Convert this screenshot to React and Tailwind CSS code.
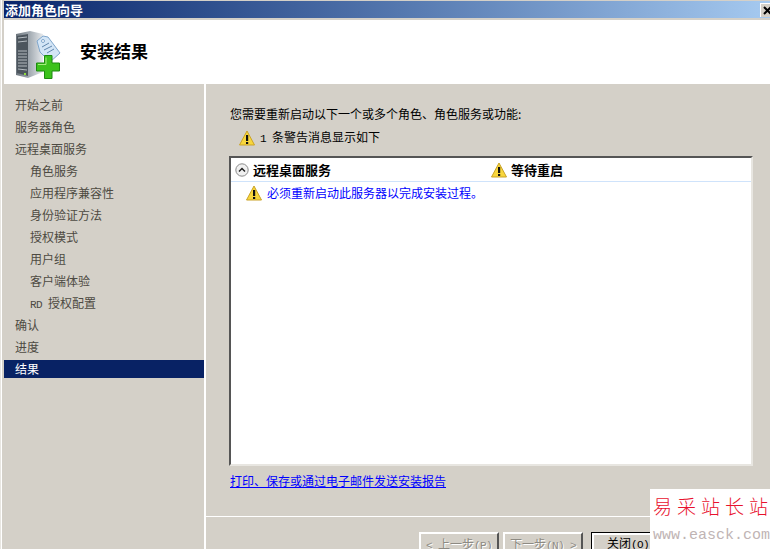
const sideItems = [
  { label: "开始之前" },
  { label: "服务器角色" },
  { label: "远程桌面服务" },
  { label: "角色服务", sub: true },
  { label: "应用程序兼容性", sub: true },
  { label: "身份验证方法", sub: true },
  { label: "授权模式", sub: true },
  { label: "用户组", sub: true },
  { label: "客户端体验", sub: true },
  { label: "RD 授权配置", latin: "RD ", rest: "授权配置", sub: true },
  { label: "确认" },
  { label: "进度" },
  { label: "结果", active: true },
];

// half-width latin like the old bitmap font: 6px per character
function Latin({ children }) {
  return <span className="font-['Liberation_Mono',monospace] text-[11px] tracking-[-0.6px] whitespace-pre">{children}</span>;
}

function WarnIcon() {
  return (
    <svg width="16" height="16" viewBox="0 0 16 16" className="shrink-0">
      <path d="M8 1 L15.5 15 L0.5 15 Z" fill="#f8d63c" stroke="#c9a227" strokeLinejoin="round" />
      <rect x="7" y="5" width="2.2" height="6" fill="#111" />
      <rect x="7" y="12" width="2.2" height="2" fill="#111" />
    </svg>
  );
}

function ServerIcon() {
  return (
    <svg width="46" height="50" viewBox="0 0 46 50" className="block">
      <defs>
        <linearGradient id="srv" x1="0" y1="0" x2="1" y2="0">
          <stop offset="0" stopColor="#6b747c" />
          <stop offset="0.5" stopColor="#a3abb2" />
          <stop offset="1" stopColor="#e6e9ec" />
        </linearGradient>
      </defs>
      <path d="M1 4 L15 1 L28 4 L28 42 L13 48 L1 45 Z" fill="url(#srv)" />
      <path d="M2 6 L13 4 L13 46 L2 43 Z" fill="#4c555d" />
      <path d="M3 8 L12 7 M3 12 L12 11 M3 21 L12 21 M3 24 L12 24 M3 27 L12 27 M3 30 L12 30 M3 33 L12 33 M3 36 L12 36 M3 39 L12 40" stroke="#b4bbc0" strokeWidth="1" />
      <rect x="9" y="43" width="2" height="2" fill="#8fdc3c" />
      <path d="M22 11 L28 6 L33 7 L45 23 L35 32 L25 22 Z" fill="#d3e5f6" stroke="#7fa6cc" />
      <circle cx="28" cy="11" r="1.5" fill="#fff" stroke="#7fa6cc" />
      <path d="M27 17 L34 13 M29 20 L37 16 M32 23 L39 19" stroke="#5f86ad" strokeWidth="1" />
      <path d="M29.5 25.5 L37 25.5 L37 33 L44.5 33 L44.5 41 L37 41 L37 48.5 L29.5 48.5 L29.5 41 L21.5 41 L21.5 33 L29.5 33 Z" fill="#3cc21c" stroke="#1d8a10" />
      <path d="M31 27.5 L31 34.5 L23 34.5" fill="none" stroke="#a6ee7e" strokeWidth="1" />
    </svg>
  );
}

function WizardButton({ children }) {
  return (
    <div className="h-[24px] w-[80px] shrink-0 border-t-2 border-r-2 border-l-2 border-t-white border-r-[#555] border-l-white pt-[2px] text-center text-[#8d8a83] [text-shadow:1px_1px_0_#fff]">
      {children}
    </div>
  );
}

export default function App() {
  return (
    <div className="relative flex h-[549px] w-[770px] overflow-hidden bg-[#d4d0c8] font-['Noto_Sans_CJK_SC',sans-serif] text-xs">
      {/* desktop sliver behind the window */}
      <div className="w-px bg-[#e8e6e1]" />
      <div className="w-px bg-white" />
      <div className="w-[2px]" />

      <div className="flex min-w-0 flex-1 flex-col">
        <div className="h-px" />
        {/* Title bar */}
        <div className="flex h-[17px] items-center justify-between bg-gradient-to-r from-[#0a246a] to-[#a6caf0] pl-px">
          <span className="text-[13px] leading-none font-bold text-white">添加角色向导</span>
          <div className="h-[14px] w-[10px] overflow-hidden border-t border-l border-white bg-[#d4d0c8]">
            <svg width="10" height="12" viewBox="0 0 10 12" className="block">
              <path d="M3 3 L10 10 M10 3 L3 10" stroke="#000" strokeWidth="2" />
            </svg>
          </div>
        </div>
        <div className="h-[2px]" />

        {/* Header */}
        <div className="flex h-[64px] items-center bg-white">
          <div className="ml-[11px] w-[65px] pt-[5px]">
            <ServerIcon />
          </div>
          <span className="pb-[3px] text-[17px] leading-none font-bold text-black">安装结果</span>
        </div>

        <div className="flex min-h-0 flex-1">
          {/* Sidebar */}
          <div className="flex w-[200px] shrink-0 flex-col pt-[12px]">
            {sideItems.map((item) => (
              <div
                key={item.label}
                className={`h-[18px] leading-[18px] ${item.sub ? "pl-[26px]" : "pl-[11px]"} ${
                  item.active ? "bg-[#082264] text-white" : "mb-[4px] text-[#4d4a42]"
                }`}
              >
                {item.latin ? (
                  <>
                    <Latin>{item.latin}</Latin>
                    {item.rest}
                  </>
                ) : (
                  item.label
                )}
              </div>
            ))}
          </div>

          <div className="w-[2px] shrink-0 bg-white" />

          {/* Main */}
          <div className="flex min-w-0 flex-1 flex-col">
            <div className="flex min-h-0 flex-1 flex-col pt-[21px] pr-[17px] pl-[24px]">
              <p className="leading-[18px] text-black">您需要重新启动以下一个或多个角色、角色服务或功能:</p>
              <div className="mt-[7px] flex h-[16px] items-center gap-[5px] pl-[9px] text-black">
                <WarnIcon />
                <span>
                  <Latin>1 </Latin>条警告消息显示如下
                </span>
              </div>

              {/* Result box */}
              <div className="mt-[10px] -ml-px h-[310px] border-2 border-t-[#555] border-r-[#e8e6e1] border-b-[#e8e6e1] border-l-[#555] bg-white">
                <div className="flex h-[24px] items-center border-b border-[#cfe3fb] pl-[4px]">
                  <svg width="14" height="14" viewBox="0 0 14 14" className="shrink-0">
                    <circle cx="7" cy="7" r="6.2" fill="#f0f0f0" stroke="#8a8a8a" />
                    <path d="M4 8.5 L7 5.5 L10 8.5" fill="none" stroke="#222" strokeWidth="1.5" />
                  </svg>
                  <span className="ml-[4px] w-[238px] text-[13px] font-bold text-black">远程桌面服务</span>
                  <WarnIcon />
                  <span className="ml-[4px] text-[13px] font-bold text-black">等待重启</span>
                </div>
                <div className="mt-[3px] flex items-center gap-[5px] pl-[15px]">
                  <WarnIcon />
                  <span className="text-[#0000ff]">必须重新启动此服务器以完成安装过程。</span>
                </div>
              </div>

              <a className="mt-[7px] self-start text-[#0000ff] underline">打印、保存或通过电子邮件发送安装报告</a>
            </div>

            {/* Footer */}
            <div className="flex h-[33px] shrink-0 items-start border-t border-t-white pt-[15px] pl-[213px]">
              <WizardButton>
                <Latin>{"< "}</Latin>上一步<Latin>(P)</Latin>
              </WizardButton>
              <div className="w-[4px] shrink-0" />
              <WizardButton>
                下一步<Latin>{"(N) >"}</Latin>
              </WizardButton>
              <div className="w-[8px] shrink-0" />
              <div className="shrink-0 border border-black">
                <div className="h-[24px] w-[80px] border-t-2 border-l-2 border-t-white border-l-white pl-[13px] text-black">
                  关闭<Latin>(O)</Latin>
                </div>
              </div>
            </div>
          </div>
        </div>
      </div>

      {/* Site watermark stamped over the corner */}
      <div className="absolute top-[489px] left-[650px] flex h-[60px] w-[120px] flex-col overflow-hidden bg-white pt-[4px] pl-[3px]">
        <span className="text-[19px] leading-[26px] font-light tracking-[5px] whitespace-nowrap text-[#e8112d]">易采站长站</span>
        <span className="mt-[9px] font-['Liberation_Mono',monospace] text-[15px] leading-none whitespace-nowrap text-[#c0b4b4]">www.easck.com</span>
      </div>
    </div>
  );
}
